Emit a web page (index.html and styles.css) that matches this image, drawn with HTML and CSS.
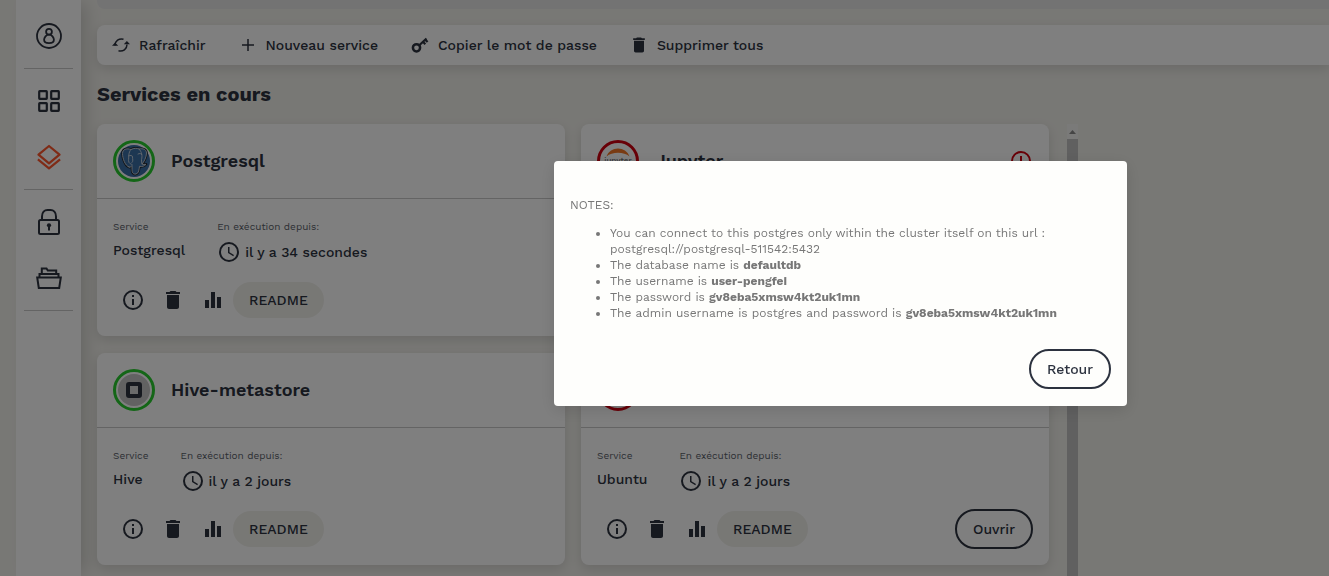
FILE: index.html
```html
<!DOCTYPE html>
<html lang="fr">
<head>
<meta charset="utf-8">
<title>Services en cours</title>
<link rel="stylesheet" href="styles.css">
</head>
<body>
<svg class="sprite" aria-hidden="true">
  <symbol id="info" viewBox="0 0 24 24"><path d="M11 17h2v-6h-2zm1-15a10 10 0 1 0 0 20 10 10 0 0 0 0-20zm0 18a8 8 0 1 1 0-16 8 8 0 0 1 0 16zM11 9h2V7h-2z"/></symbol>
  <symbol id="trash" viewBox="0 0 24 24"><path d="M6 19c0 1.100.9 2 2 2h8c1.100 0 2-.9 2-2V7H6zM19 4h-3.500l-1-1h-5l-1 1H5v2h14z"/></symbol>
  <symbol id="chart" viewBox="0 0 24 24"><path d="M10 20h4V4h-4zm-6 0h4v-8H4zM16 9v11h4V9z"/></symbol>
  <symbol id="clock" viewBox="0 0 24 24"><path d="M12 2a10 10 0 1 0 0 20 10 10 0 0 0 0-20zm0 18a8 8 0 1 1 0-16 8 8 0 0 1 0 16zm.5-13H11v6l5.250 3.150.75-1.230-4.500-2.670z"/></symbol>
  <symbol id="alert" viewBox="0 0 24 24"><path d="M11 15h2v2h-2zm0-8h2v6h-2zm1-5a10 10 0 1 0 0 20 10 10 0 0 0 0-20zm0 18a8 8 0 1 1 0-16 8 8 0 0 1 0 16z"/></symbol>
</svg>

<div class="app">
  <nav class="sidebar" aria-label="Navigation">
    <div class="nav-group">
      <a class="nav-item" href="#compte" aria-label="Compte"><svg width="26" height="26" viewBox="0 0 26 26" fill="none" stroke="currentColor" stroke-width="1.800"><circle cx="13" cy="13" r="12"/><circle cx="13" cy="8.700" r="2.900"/><path d="M13 11.600c-2.900 0-4.900 2.900-4.900 5.200 0 2.400 2 3.400 4.900 3.400s4.900-1 4.900-3.400c0-2.300-2-5.200-4.900-5.200z"/></svg></a>
    </div>
    <div class="nav-group">
      <a class="nav-item" href="#catalogue" aria-label="Catalogue"><svg width="22" height="22" viewBox="0 0 22 22" fill="none" stroke="currentColor" stroke-width="2.200"><rect x="1.200" y="1.200" width="7.600" height="7.600" rx=".5"/><rect x="13.200" y="1.200" width="7.600" height="7.600" rx=".5"/><rect x="1.200" y="13.200" width="7.600" height="7.600" rx=".5"/><rect x="13.200" y="13.200" width="7.600" height="7.600" rx=".5"/></svg></a>
      <a class="nav-item nav-item--active" href="#services" aria-label="Services"><svg width="24" height="26" viewBox="0 0 24 26" fill="none" stroke="currentColor" stroke-width="2.200" stroke-linejoin="round"><path d="M12 2L22.500 10.700 12 19.300 1.500 10.700zM.9 15.300L12 24.300l11.100-9"/></svg></a>
    </div>
    <div class="nav-group">
      <a class="nav-item" href="#secrets" aria-label="Secrets"><svg width="22" height="26" viewBox="0 0 22 26" fill="none" stroke="currentColor" stroke-width="2"><rect x="1" y="11" width="20" height="14" rx="1.500"/><path d="M4 11V7.500C4 3.500 6.500 1 9.500 1h3C15.500 1 18 3.500 18 7.500V11"/><circle cx="11" cy="16.300" r="2.100" fill="currentColor" stroke="none"/><path d="M11 16v5.500"/></svg></a>
      <a class="nav-item" href="#fichiers" aria-label="Fichiers"><svg width="26" height="22" viewBox="0 0 26 22" fill="none" stroke="currentColor" stroke-width="2"><path d="M1.200 10.500h23.600l-1.600 10.500H2.800zM3.500 10V7h19v3M5.800 7V1.500h4.700l1.300 2h8.400V7"/></svg></a>
    </div>
  </nav>

  <main class="main">
    <div class="banner"></div>
    <div class="toolbar">
      <button class="tool"><svg width="20" height="20" viewBox="0 0 20 20" fill="none" stroke="currentColor" stroke-width="1.500"><path d="M4 10.500C4 6 8 3 12.500 4.200M16 9.500C16 14 12 17 7.500 15.800"/><path d="M1 10.800h6.200L4.100 7.600zM12.800 9.200H19l-3.100-3.200z" fill="currentColor" stroke="none"/></svg>Rafraîchir</button>
      <button class="tool"><svg width="20" height="20" viewBox="0 0 20 20" fill="none" stroke="currentColor" stroke-width="1.500"><path d="M10 4v12M4 10h12"/></svg>Nouveau service</button>
      <button class="tool"><svg width="20" height="20" viewBox="0 0 20 20" fill="none" stroke="currentColor"><circle cx="6.500" cy="12.800" r="3.600" stroke-width="2.500"/><path d="M9 10.500L16.500 3.500M13 6.800l2.300 2.400M15.300 4.700l2.300 2.400" stroke-width="2.200"/></svg>Copier le mot de passe</button>
      <button class="tool"><svg width="20" height="20"><use href="#trash"/></svg>Supprimer tous</button>
    </div>
    <h1 class="heading">Services en cours</h1>

    <div class="content">
      <div class="cards">
        <article class="card">
          <header class="card-head">
            <span class="avatar"><svg width="32" height="32" viewBox="0 0 32 32"><circle cx="16" cy="16" r="16" fill="#3a6ea5"/><g fill="#3a6ea5" stroke-linejoin="round" stroke-linecap="round"><path d="M11 22C7 21 4.500 13 4.500 8.500 4.500 4 9 3 13 4.500 16 3 19 3 21 4c4-1 7.500.5 7.500 4 0 4-2.500 9-4.500 11 1 .7 3 .5 4 .3-1.500 2-4 2.500-6.500 2-.5 3-.5 7-3.500 7.700-3 .5-4-1.500-4-4.500v-4c-1 1.500-2 2-3 1.500z" stroke="#20252c" stroke-width="2.600"/><path d="M11 22C7 21 4.500 13 4.500 8.500 4.500 4 9 3 13 4.500 16 3 19 3 21 4c4-1 7.500.5 7.500 4 0 4-2.500 9-4.500 11 1 .7 3 .5 4 .3-1.500 2-4 2.500-6.500 2-.5 3-.5 7-3.500 7.700-3 .5-4-1.500-4-4.500v-4c-1 1.500-2 2-3 1.500z" stroke="#cbd4dc" stroke-width=".9"/><path d="M13 4.500c-3 3-2 8-2.500 11 0 3 3 4 3.500 4M21 4c3 3 3.500 7 2.500 10.500-.3 2 .5 3 .5 4.500M10.500 11c2-1 4-.8 4 1 0 2.500 1 4-.5 5.500M20 9c1.500-1 3.500-.5 3.700.5" fill="none" stroke="#cbd4dc" stroke-width=".9"/></g></svg></span>
            <h2 class="card-title">Postgresql</h2>
          </header>
          <div class="card-body">
            <dl class="meta">
              <div><dt>Service</dt><dd>Postgresql</dd></div>
              <div><dt>En exécution depuis:</dt><dd class="since"><svg width="24" height="24"><use href="#clock"/></svg>il y a 34 secondes</dd></div>
            </dl>
            <div class="actions">
              <button class="icon-btn" aria-label="Détails"><svg width="24" height="24"><use href="#info"/></svg></button>
              <button class="icon-btn" aria-label="Supprimer"><svg width="24" height="24"><use href="#trash"/></svg></button>
              <button class="icon-btn" aria-label="Suivi"><svg width="24" height="24"><use href="#chart"/></svg></button>
              <button class="btn btn--soft">README</button>
            </div>
          </div>
        </article>

        <article class="card">
          <header class="card-head">
            <span class="avatar avatar--error"><svg width="32" height="32" viewBox="0 0 32 32"><path d="M4.500 11.500C8 .8 24 .8 27.500 11.500 22 6.500 10 6.500 4.500 11.500z" fill="#f37726"/><text class="logo-text" x="16" y="18" text-anchor="middle">jupyter</text><path d="M4.500 21C8 32 24 32 27.500 21 22 26.500 10 26.500 4.500 21z" fill="#f37726"/></svg></span>
            <h2 class="card-title">Jupyter</h2>
            <svg class="alert" width="24" height="24"><use href="#alert"/></svg>
          </header>
        </article>

        <article class="card">
          <header class="card-head">
            <span class="avatar"><svg width="32" height="32" viewBox="0 0 32 32"><circle cx="16" cy="16" r="16" fill="#c4c4c4"/><rect x="10" y="10" width="12" height="12" rx="1" fill="#d4d4d4" stroke="#2c323f" stroke-width="4"/></svg></span>
            <h2 class="card-title">Hive-metastore</h2>
          </header>
          <div class="card-body">
            <dl class="meta">
              <div><dt>Service</dt><dd>Hive</dd></div>
              <div><dt>En exécution depuis:</dt><dd class="since"><svg width="24" height="24"><use href="#clock"/></svg>il y a 2 jours</dd></div>
            </dl>
            <div class="actions">
              <button class="icon-btn" aria-label="Détails"><svg width="24" height="24"><use href="#info"/></svg></button>
              <button class="icon-btn" aria-label="Supprimer"><svg width="24" height="24"><use href="#trash"/></svg></button>
              <button class="icon-btn" aria-label="Suivi"><svg width="24" height="24"><use href="#chart"/></svg></button>
              <button class="btn btn--soft">README</button>
            </div>
          </div>
        </article>

        <article class="card">
          <header class="card-head">
            <span class="avatar avatar--error"></span>
          </header>
          <div class="card-body">
            <dl class="meta">
              <div><dt>Service</dt><dd>Ubuntu</dd></div>
              <div><dt>En exécution depuis:</dt><dd class="since"><svg width="24" height="24"><use href="#clock"/></svg>il y a 2 jours</dd></div>
            </dl>
            <div class="actions">
              <button class="icon-btn" aria-label="Détails"><svg width="24" height="24"><use href="#info"/></svg></button>
              <button class="icon-btn" aria-label="Supprimer"><svg width="24" height="24"><use href="#trash"/></svg></button>
              <button class="icon-btn" aria-label="Suivi"><svg width="24" height="24"><use href="#chart"/></svg></button>
              <button class="btn btn--soft">README</button>
              <button class="btn btn--outline btn--end">Ouvrir</button>
            </div>
          </div>
        </article>
      </div>
      <div class="scrollbar"><svg width="11" height="15" viewBox="0 0 11 15"><path d="M2 10l3.500-4L9 10z" fill="#8a8a8a"/></svg><div class="thumb"></div></div>
    </div>
  </main>
</div>

<div class="overlay">
  <section class="dialog" role="dialog" aria-modal="true" aria-label="Notes">
    <div class="notes">
      <p>NOTES:</p>
      <ul>
        <li>You can connect to this postgres only within the cluster itself on this url : postgresql://postgresql-511542:5432</li>
        <li>The database name is <strong>defaultdb</strong></li>
        <li>The username is <strong>user-pengfei</strong></li>
        <li>The password is <strong>gv8eba5xmsw4kt2uk1mn</strong></li>
        <li>The admin username is postgres and password is <strong>gv8eba5xmsw4kt2uk1mn</strong></li>
      </ul>
    </div>
    <div class="dialog-foot"><button class="btn btn--outline">Retour</button></div>
  </section>
</div>
</body>
</html>
```
FILE: styles.css
```css
* { box-sizing: border-box; }

:root {
  --ink: #2c323f;
  --page: #f1f0eb;
  --line: #c8c8c8;
  --shadow: 0 4px 12px rgba(0, 0, 0, .12);
}

body {
  margin: 0;
  background: var(--page);
  color: var(--ink);
  font: 500 14px/20px "Work Sans", Inter, "Open Sans", sans-serif;
}

button {
  padding: 0;
  border: 0;
  background: none;
  color: inherit;
  font: inherit;
}

h1, h2, p, dl, dd { margin: 0; }
svg { display: block; flex: none; fill: currentColor; }
svg[fill="none"] { fill: none; }
.sprite { display: none; }

.app {
  display: flex;
  height: 100vh;
  overflow: hidden;
  padding-left: 16px;
}

.sidebar {
  flex: none;
  width: 65px;
  padding: 4px 8px;
  background: #fff;
  box-shadow: 8px 0 16px -4px rgba(0, 0, 0, .16);
}
.nav-group { padding: 4px 0; border-bottom: 1px solid var(--line); }
.nav-item {
  display: flex;
  align-items: center;
  justify-content: center;
  height: 56px;
  color: var(--ink);
}
.nav-item--active { color: #ff562c; }

.main {
  flex: 1;
  min-width: 0;
  display: flex;
  flex-direction: column;
  padding-left: 16px;
}
.banner {
  flex: none;
  height: 9px;
  background: #e6e6e6;
  border-bottom-left-radius: 8px;
}
.toolbar {
  flex: none;
  display: flex;
  gap: 32px;
  height: 40px;
  margin-top: 16px;
  padding: 0 14px;
  background: #fff;
  border-radius: 8px 0 0 8px;
  box-shadow: var(--shadow);
}
.tool { display: flex; align-items: center; gap: 8px; }

.heading {
  padding: 16px 0 17px;
  font-size: 20px;
  line-height: 26px;
  font-weight: 700;
}

.content {
  flex: 1;
  min-height: 0;
  display: grid;
  grid-template-columns: 970fr 11px 251fr;
}
.cards {
  display: grid;
  grid-template-columns: 1fr 1fr;
  align-content: start;
  gap: 17px 16px;
  padding-right: 18px;
}

.card {
  background: #fff;
  border-radius: 8px;
  box-shadow: var(--shadow);
}
.card-head {
  display: flex;
  align-items: center;
  gap: 16px;
  padding: 16px;
  border-bottom: 1px solid var(--line);
}
.avatar {
  display: flex;
  align-items: center;
  justify-content: center;
  width: 42px;
  height: 42px;
  border: 3px solid #29cc2f;
  border-radius: 50%;
}
.avatar--error { border-color: #d1000f; }
.logo-text { font-size: 8px; fill: #6d6d6d; }
.card-title { font-size: 18px; line-height: 24px; font-weight: 600; }
.alert { margin-left: auto; color: #d1000f; }

.card-body { padding: 21px 16px 16px; }
.meta { display: flex; gap: 32px; }
.meta dt {
  margin-bottom: 6px;
  color: #595e68;
  font-size: 10px;
  line-height: 14px;
  font-weight: 400;
}
.since { display: flex; align-items: center; gap: 4px; line-height: 24px; }
.actions { display: flex; align-items: center; height: 40px; margin-top: 16px; }
.icon-btn {
  display: flex;
  align-items: center;
  justify-content: center;
  width: 40px;
  height: 40px;
}
.btn { padding: 8px 16px; border-radius: 20px; }
.btn--soft { background: var(--page); }
.btn--outline { padding: 8px 16px; border: 2px solid var(--ink); }
.btn--end { margin-left: auto; }

.scrollbar { display: flex; flex-direction: column; background: #f4f4f2; }
.thumb { flex: 1; background: #c1c1c1; }

.overlay {
  position: fixed;
  inset: 0;
  display: flex;
  align-items: center;
  justify-content: center;
  padding: 0 0 9px 352px;
  background: rgba(0, 0, 0, .5);
}
.dialog {
  width: 573px;
  padding: 36px 16px 17px;
  background: #fefefc;
  border-radius: 4px;
  box-shadow: 0 4px 16px rgba(0, 0, 0, .12);
}
.notes { color: #777; font-size: 12px; line-height: 16px; font-weight: 400; }
.notes ul { margin: 12px 0 28px; padding-left: 40px; }
.notes strong { font-weight: 700; }
.dialog-foot { display: flex; justify-content: flex-end; }
```
